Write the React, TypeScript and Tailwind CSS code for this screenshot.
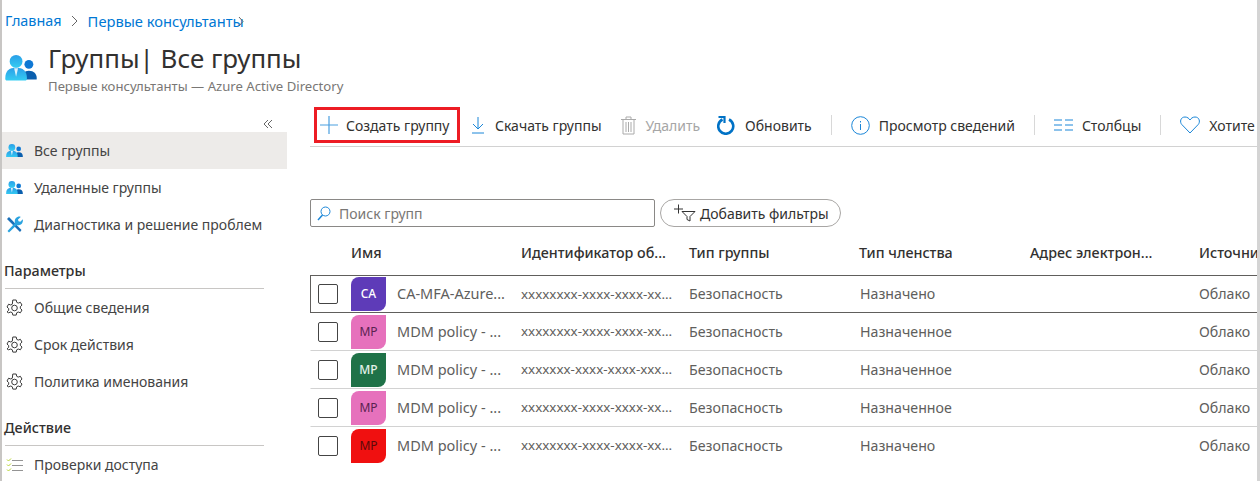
const font = "font-['Noto_Sans','Open_Sans',sans-serif]";

function GroupIcon({ size, id }: { size: number; id: string }) {
  return (
    <svg width={size} height={size * 0.8} viewBox="0 0 32 26">
      <defs>
        <linearGradient id={id} x1="0" y1="0" x2="0" y2="1">
          <stop offset="0" stopColor="#2a9ee8" />
          <stop offset="1" stopColor="#35cdf2" />
        </linearGradient>
      </defs>
      <circle cx="24" cy="9.500" r="4.500" fill="#0f78d4" />
      <path d="M18 25c0-6 1-9 6-9s8 3 8 8c0 .6-.4 1-1 1z" fill="#0a5fae" />
      <circle cx="11" cy="6.500" r="6.500" fill={`url(#${id})`} />
      <path d="M0 24c0-8 4-11 11-11s11 3 11 11c0 1-.5 2-2 2H2c-1.500 0-2-1-2-2z" fill={`url(#${id})`} />
      <path d="M9 13.500h4L11 22z" fill="#fff" opacity="0.85" />
    </svg>
  );
}

function WrenchIcon() {
  return (
    <svg width="17" height="17" viewBox="0 0 17 17">
      <path d="M1 3l2-2 12.500 13-1.500 2z" fill="#1a6fb8" />
      <path d="M1.500 15l7.500-8c-.8-2.500.2-5.500 3-6.200 1-.3 2-.2 2.700.1L12 3.500l.5 1.800 1.800.5 2.500-2.500c.5 2.700-.8 5-3.300 5.700-1 .3-1.700.2-2.700 0L3 16.500z" fill="#2aa3df" />
    </svg>
  );
}

function ChecklistIcon() {
  return (
    <svg width="17" height="16" viewBox="0 0 17 16" fill="none">
      <path d="M1 2.500l1.500 1.500L5 1.500M1 7.500L2.500 9 5 6.500M1 12.500L2.500 14 5 11.500" stroke="#b7d332" />
      <path d="M6 3.500h11M6 8.500h11M6 13.500h11" stroke="#949494" />
    </svg>
  );
}

function Gear() {
  return (
    <svg width="17" height="18" viewBox="0 0 17 18" fill="none" stroke="#3a3a3a">
      <circle cx="8.500" cy="9" r="2.800" />
      <path d="M6.800 1h3.400l.5 2.300 1.500.8 2.200-.8 1.600 2.800-1.700 1.600v1.700l1.700 1.600-1.600 2.800-2.200-.8-1.500.8-.5 2.300H6.800l-.5-2.300-1.500-.8-2.200.8L1 12.900l1.700-1.600V9.600L1 8l1.600-2.800 2.200.8 1.500-.8z" />
    </svg>
  );
}

function SideItem({ icon, label, active }: { icon: React.ReactNode; label: string; active?: boolean }) {
  return (
    <div className={`flex h-[37px] items-center ${active ? "bg-[#edebe9]" : ""}`}>
      <div className="flex w-[32px] justify-center pr-[8px]">{icon}</div>
      <span className="text-[14px] text-[#444]">{label}</span>
    </div>
  );
}

function SideHeader({ label }: { label: string }) {
  return (
    <div className="ml-[3px] mr-[23px] mt-[10px] flex h-[36px] items-center border-b border-[#c8c6c4] pt-[1px] text-[14.300px] font-medium text-[#323130]">
      <span className="-ml-[1px]">{label}</span>
    </div>
  );
}

function Sep() {
  return <div className="mx-[19px] h-[20px] w-px bg-[#d8d8d8]" />;
}

function ToolItem({ icon, label, muted, tight }: { icon: React.ReactNode; label: string; muted?: boolean; tight?: boolean }) {
  return (
    <div className={`flex items-center ${tight ? "gap-[9px]" : "gap-[10px]"}`}>
      {icon}
      <span className={`whitespace-nowrap text-[14px] ${muted ? "text-[#a6a6a6]" : "text-[#323130]"}`}>{label}</span>
    </div>
  );
}

const rows = [
  { initials: "CA", color: "bg-[#5e3bb8] text-white font-medium", name: "CA-MFA-Azure...", id: "xxxxxxxx-xxxx-xxxx-xx...", member: "Назначено", focus: true },
  { initials: "MP", color: "bg-[#e671bc] text-[#5a2350]", name: "MDM policy - ...", id: "xxxxxxxx-xxxx-xxxx-xx...", member: "Назначенное" },
  { initials: "MP", color: "bg-[#1f7248] text-[#e4f2ea] font-medium", name: "MDM policy - ...", id: "xxxxxxx-xxxx-xxxx-xxx...", member: "Назначенное" },
  { initials: "MP", color: "bg-[#e671bc] text-[#5a2350]", name: "MDM policy - ...", id: "xxxxxxxx-xxxx-xxxx-xx...", member: "Назначенное" },
  { initials: "MP", color: "bg-[#f01010] text-[#5c0a0a]", name: "MDM policy - ...", id: "xxxxxxxx-xxxx-xxxx-xx...", member: "Назначено" },
];

const cols = "grid grid-cols-[40px_46px_124px_168px_170px_171px_169px_58px] items-center";

export default function App() {
  return (
    <div className={`${font} h-[481px] w-[1260px] overflow-hidden border-l-2 border-r-[3px] border-[#c8c6c4] border-r-[#d4d4d4] bg-white`}>
      {/* breadcrumb */}
      <div className="flex h-[42px] items-center pl-[3px] text-[14.400px] text-[#0078d4]">
        <span>Главная</span>
        <svg className="mx-[9px]" width="8" height="12" viewBox="0 0 8 12" fill="none">
          <path d="M1 1l5 5-5 5" stroke="#666" />
        </svg>
        <span className="text-[14.700px]">Первые консультанты</span>
        <svg className="-ml-[6px]" width="6" height="11" viewBox="0 0 6 11" fill="none">
          <path d="M1 1l4 4.500-4 4.500" stroke="#666" />
        </svg>
      </div>

      {/* title */}
      <div className="flex h-[58px] items-start pl-[3px]">
        <div className="mt-[13px] w-[43px]">
          <GroupIcon size={32} id="grp-title" />
        </div>
        <div>
          <div className="text-[25.900px] leading-[32px] text-[#323130]">Группы| Все группы</div>
          <div className="mt-[4px] text-[13.150px] leading-[16px] text-[#797775]">Первые консультанты — Azure Active Directory</div>
        </div>
      </div>

      <div className="flex">
        {/* sidebar */}
        <div className="w-[285px]">
          <div className="flex h-[32px] items-center justify-end pr-[14px] pt-[16px]">
            <svg width="10" height="10" viewBox="0 0 10 10" fill="none">
              <path d="M5 1L1 5l4 4M9 1L5 5l4 4" stroke="#666" />
            </svg>
          </div>
          <SideItem icon={<GroupIcon size={17} id="grp-all" />} label="Все группы" active />
          <SideItem icon={<GroupIcon size={17} id="grp-del" />} label="Удаленные группы" />
          <SideItem icon={<WrenchIcon />} label="Диагностика и решение проблем" />
          <SideHeader label="Параметры" />
          <SideItem icon={<Gear />} label="Общие сведения" />
          <SideItem icon={<Gear />} label="Срок действия" />
          <SideItem icon={<Gear />} label="Политика именования" />
          <SideHeader label="Действие" />
          <SideItem icon={<ChecklistIcon />} label="Проверки доступа" />
        </div>

        {/* main */}
        <div className="ml-[23px] flex-1 overflow-hidden">
          {/* toolbar */}
          <div className="mt-[7px] flex h-[40px] items-center border-b border-[#d2d2d2] pb-[3px]">
            <div className="ml-[4px] mr-[11px] flex h-[36px] w-[146px] items-center gap-[8px] border-[3px] border-[#ed1c24] pl-[3px]">
              <svg width="18" height="18" viewBox="0 0 18 18" fill="none">
                <path d="M9 0v18M0 9h18" stroke="#4a9fe0" strokeWidth="1.200" />
              </svg>
              <span className="whitespace-nowrap text-[14px] text-[#323130]">Создать группу</span>
            </div>
            <ToolItem
              label="Скачать группы"
              icon={
                <svg width="14" height="18" viewBox="0 0 14 18" fill="none">
                  <path d="M7 1v12M2 8l5 5 5-5M1 17h12" stroke="#1a86d8" />
                </svg>
              }
            />
            <div className="w-[19px]" />
            <ToolItem
              label="Удалить"
              muted
              icon={
                <svg width="15" height="19" viewBox="0 0 15 19" fill="none">
                  <path d="M0 3.500h15M5 3.500V1h5v2.500M2 3.500V18h11V3.500M5 6v10M7.500 6v10M10 6v10" stroke="#aaa" />
                </svg>
              }
            />
            <div className="w-[17px]" />
            <ToolItem
              label="Обновить"
              icon={
                <svg width="18" height="20" viewBox="0 0 18 20" fill="none">
                  <path d="M5.500 4.500A7.500 7.500 0 1 0 12 4.500" stroke="#0072c6" strokeWidth="2.600" />
                  <path d="M1.500 2h6V8" stroke="#0072c6" strokeWidth="2.200" />
                </svg>
              }
            />
            <Sep />
            <ToolItem
              label="Просмотр сведений"
              tight
              icon={
                <svg width="19" height="19" viewBox="0 0 19 19" fill="none">
                  <circle cx="9.500" cy="9.500" r="8.800" stroke="#1a86d8" />
                  <path d="M9.500 8v6M9.500 5v1.500" stroke="#1a86d8" />
                </svg>
              }
            />
            <Sep />
            <ToolItem
              label="Столбцы"
              tight
              icon={
                <svg width="19" height="12" viewBox="0 0 19 12" fill="none">
                  <path d="M0 1h8M0 6h8M0 11h8M11 1h8M11 6h8M11 11h8" stroke="#1a86d8" />
                </svg>
              }
            />
            <Sep />
            <ToolItem
              label="Хотите"
              tight
              icon={
                <svg width="20" height="18" viewBox="0 0 20 18" fill="none">
                  <path d="M10 17L1.800 8.500C-.5 6 .5 1 5 1c2.500 0 4 1.500 5 3 1-1.500 2.500-3 5-3 4.500 0 5.500 5 3.200 7.500z" stroke="#1a86d8" />
                </svg>
              }
            />
          </div>

          {/* search and filters */}
          <div className="mt-[52px] flex items-center gap-[5px]">
            <div className="flex h-[28px] w-[345px] items-center gap-[8px] rounded-[2px] border border-[#8a8886] pl-[6px]">
              <svg width="14" height="15" viewBox="0 0 14 15" fill="none">
                <circle cx="8.500" cy="5.500" r="4.500" stroke="#1a86d8" />
                <path d="M5.500 9L1 14" stroke="#1a86d8" strokeWidth="1.500" />
              </svg>
              <span className="text-[14px] text-[#797775]">Поиск групп</span>
            </div>
            <div className="flex h-[28px] w-[181px] items-center gap-[3px] rounded-full border border-[#a8a6a4] pl-[13px]">
              <svg width="23" height="18" viewBox="0 0 23 18" fill="none">
                <path d="M0 5h9M4.500 .5v9" stroke="#333" />
                <path d="M8 7.500h13l-5 5V17l-3-1.500v-3z" stroke="#333" />
              </svg>
              <span className="whitespace-nowrap text-[14px] text-[#323130]">Добавить фильтры</span>
            </div>
          </div>

          {/* table */}
          <div className={`${cols} mt-[6px] h-[42px] pb-[2px] pl-px text-[14.300px] font-medium text-[#323130]`}>
            <div />
            <div className="col-span-2">Имя</div>
            <div>Идентификатор об...</div>
            <div>Тип группы</div>
            <div>Тип членства</div>
            <div>Адрес электрон...</div>
            <div className="whitespace-nowrap">Источни</div>
          </div>
          {rows.map((r) => (
            <div
              key={r.name + r.color + r.id + r.member}
              className={`${cols} h-[38px] border-b border-l text-[14.200px] text-[#605e5c] ${
                r.focus ? "border-t border-[#605e5c]" : "border-b-[#d2d2d2] border-l-transparent"
              } last:border-b-transparent`}
            >
              <div className="flex justify-center pr-[6px]">
                <div className="h-[20px] w-[20px] rounded-[2px] border border-[#444]" />
              </div>
              <div
                className={`flex h-[34px] w-[35px] items-center justify-center rounded-tl-[8px] rounded-br-[8px] text-[12px] ${r.color}`}
              >
                {r.initials}
              </div>
              <div className="whitespace-nowrap text-[14.500px]">{r.name}</div>
              <div className="whitespace-nowrap text-[13.400px]">{r.id}</div>
              <div>Безопасность</div>
              <div className="pl-px">{r.member}</div>
              <div />
              <div>Облако</div>
            </div>
          ))}
        </div>
      </div>
    </div>
  );
}
